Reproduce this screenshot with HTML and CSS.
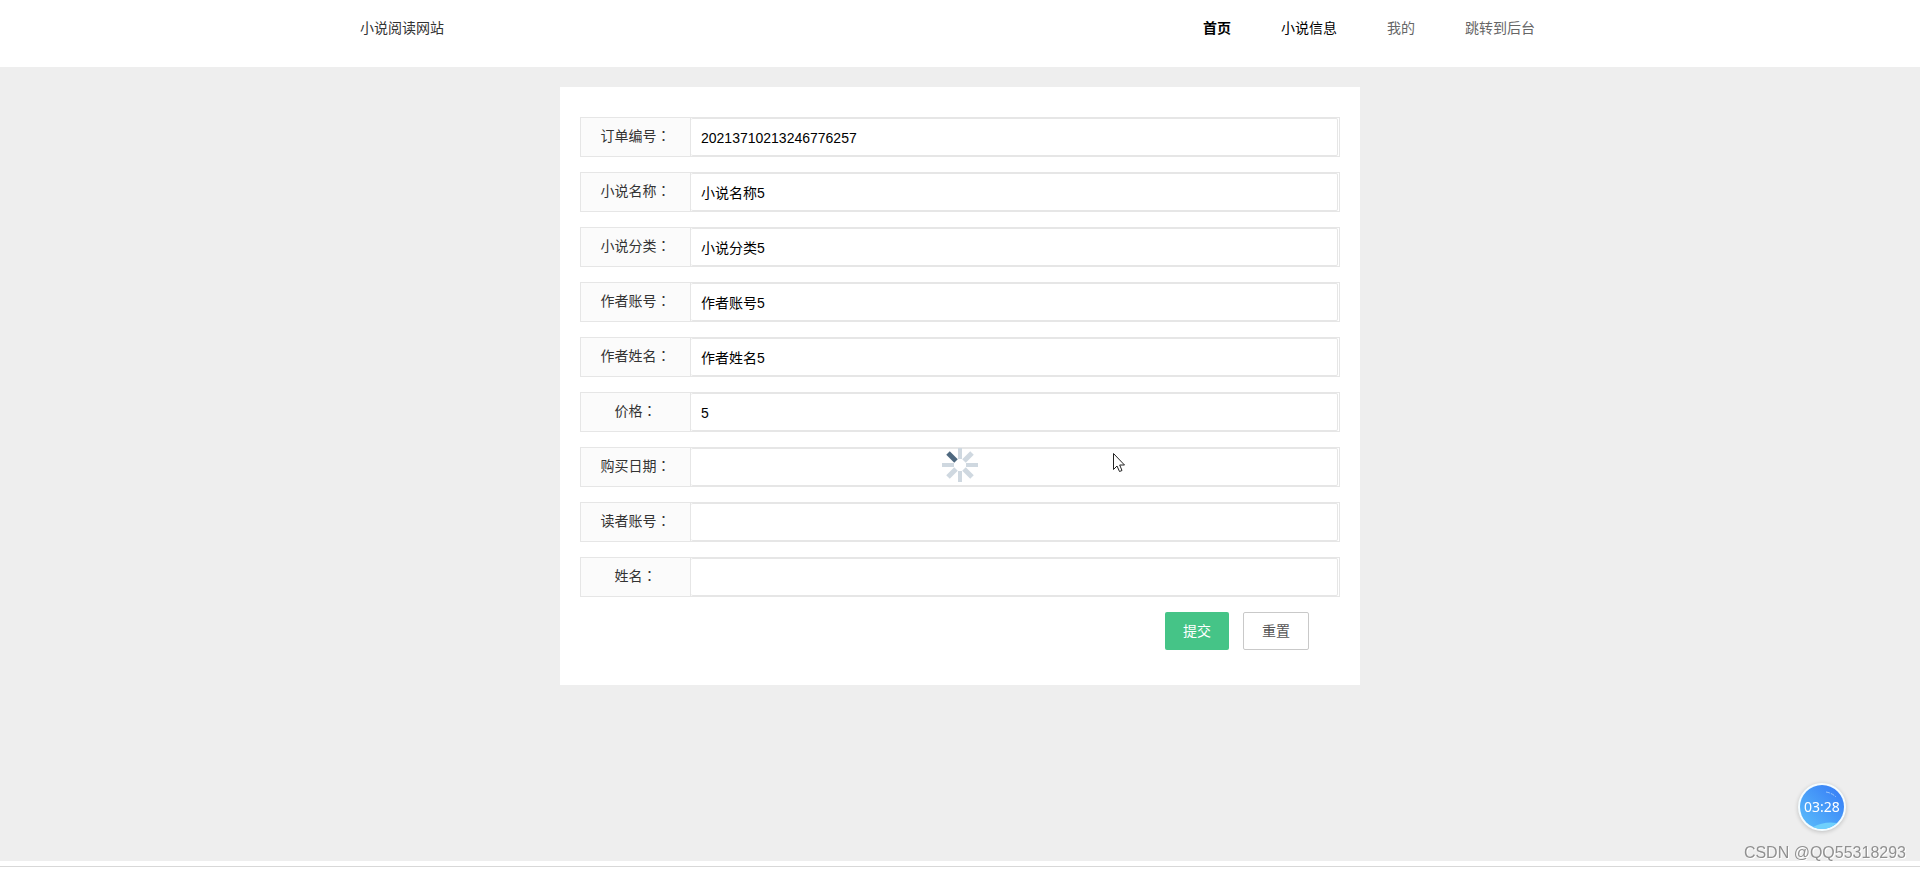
FILE: index.html
```
<!DOCTYPE html>
<html lang="zh-CN">
<head>
<meta charset="utf-8">
<title>小说阅读网站</title>
<link rel="stylesheet" href="styles.css">
</head>
<body>
<header class="header">
  <div class="header-inner">
    <span class="brand">小说阅读网站</span>
    <nav class="nav">
      <a class="nav-link current" href="#">首页</a>
      <a class="nav-link active" href="#">小说信息</a>
      <a class="nav-link" href="#">我的</a>
      <a class="nav-link" href="#">跳转到后台</a>
    </nav>
  </div>
</header>
<main class="main">
  <form class="card">
    <div class="row"><label class="label" for="f1">订单编号<span class="colon" lang="zh-TW">：</span></label><input class="input" id="f1" type="text" value="20213710213246776257"></div>
    <div class="row"><label class="label" for="f2">小说名称<span class="colon" lang="zh-TW">：</span></label><input class="input" id="f2" type="text" value="小说名称5"></div>
    <div class="row"><label class="label" for="f3">小说分类<span class="colon" lang="zh-TW">：</span></label><input class="input" id="f3" type="text" value="小说分类5"></div>
    <div class="row"><label class="label" for="f4">作者账号<span class="colon" lang="zh-TW">：</span></label><input class="input" id="f4" type="text" value="作者账号5"></div>
    <div class="row"><label class="label" for="f5">作者姓名<span class="colon" lang="zh-TW">：</span></label><input class="input" id="f5" type="text" value="作者姓名5"></div>
    <div class="row"><label class="label" for="f6">价格<span class="colon" lang="zh-TW">：</span></label><input class="input" id="f6" type="text" value="5"></div>
    <div class="row"><label class="label" for="f7">购买日期<span class="colon" lang="zh-TW">：</span></label><input class="input" id="f7" type="text"></div>
    <div class="row"><label class="label" for="f8">读者账号<span class="colon" lang="zh-TW">：</span></label><input class="input" id="f8" type="text"></div>
    <div class="row"><label class="label" for="f9">姓名<span class="colon" lang="zh-TW">：</span></label><input class="input" id="f9" type="text"></div>
    <div class="actions">
      <button class="btn btn-primary" type="submit">提交</button>
      <button class="btn btn-plain" type="reset">重置</button>
    </div>
  </form>
</main>
<footer class="footer"></footer>
<svg class="spinner" viewBox="-18 -18 36 36" aria-hidden="true">
  <g stroke="#cfd8e0" stroke-width="4">
    <path d="M0-6V-17M0 6V17M-6 0H-18M6 0H18"/>
    <path stroke-width="5" d="M4-4L12-12M4 4L12 12M-4 4L-12 12"/>
  </g>
  <path stroke="#4e687f" stroke-width="5" d="M-4-4L-12-12"/>
</svg>
<svg class="pointer" viewBox="0 0 12 19" aria-hidden="true">
  <path d="M.5.5V16.5L4 13L6.5 18.5L9 17.5L6.7 12H11.5Z" fill="#fff" stroke="#222" stroke-width="1"/>
</svg>
<div class="clock">
  <svg class="clock-art" viewBox="0 0 44 44" aria-hidden="true">
    <defs><linearGradient id="sky" x1="0" y1="1" x2="1" y2="0"><stop offset="0" stop-color="#5cc0fb"/><stop offset="1" stop-color="#3478f6"/></linearGradient></defs>
    <circle cx="22" cy="22" r="22" fill="url(#sky)"/>
    <path d="M13 42Q24 36 37 38Q30 44 22 44Q17 44 13 42Z" fill="#6fd0fc"/>
    <path d="M26 7Q32 8 36 12" fill="none" stroke="#9cc6fb" stroke-width="1" stroke-dasharray="4 1"/>
  </svg>
  <span class="clock-time">03:28</span>
</div>
<div class="watermark">CSDN @QQ55318293</div>
</body>
</html>
```
FILE: styles.css
```
* { box-sizing: border-box; }
body {
  margin: 0;
  min-height: 100vh;
  display: flex;
  flex-direction: column;
  background: #eee;
  color: #333;
  font: 14px/20px "Liberation Sans", "Noto Sans CJK SC", sans-serif;
}
.header { background: #fff; padding: 18px 20px 29px; }
.header-inner {
  max-width: 1200px;
  margin: 0 auto;
  display: flex;
  justify-content: space-between;
}
.nav { display: flex; gap: 50px; padding-right: 25px; }
.nav-link { color: #666; text-decoration: none; }
.active { color: #000; }
.current { color: #000; font-weight: 700; }
.main { flex: 1; padding: 20px; }
.card {
  max-width: 800px;
  margin: 0 auto;
  padding: 30px 20px 35px;
  background: #fff;
}
.row {
  display: flex;
  margin-bottom: 15px;
  height: 40px;
  border: 1px solid #e6e6e6;
  padding-right: 1px;
}
.label {
  width: 110px;
  padding: 7px 0;
  text-align: center;
  background: #fbfbfb;
  border-right: 1px solid #e6e6e6;
}
.colon { font-family: "Noto Sans CJK TC", sans-serif; }
.input {
  flex: 1;
  min-width: 0;
  padding: 2px 10px 0;
  border: 1px solid #e6e6e6;
  border-left: 0;
  border-radius: 2px;
  background: #fff;
  color: #000;
  font: inherit;
  outline: 0;
}
.actions { display: flex; justify-content: flex-end; gap: 14px; padding-right: 31px; }
.btn {
  height: 38px;
  padding: 0 18px;
  border: 0;
  border-radius: 2px;
  font: inherit;
}
.btn-primary { background: #45c487; color: #fff; }
.btn-plain { background: #fff; color: #555; border: 1px solid #c9c9c9; }
.footer {
  padding-top: 5px;
  background: #fff;
}
.footer::after {
  content: "";
  display: block;
  height: 3px;
  border-top: 1px solid #d8d8d8;
}
.spinner {
  position: fixed;
  left: 50%;
  top: 465px;
  width: 36px;
  height: 36px;
  transform: translate(-50%, -50%);
}
.pointer { position: fixed; left: 1113px; top: 453px; width: 12px; height: 19px; }
.clock {
  position: fixed;
  right: 74px;
  bottom: 39px;
  width: 48px;
  height: 48px;
  padding: 2px;
  border-radius: 50%;
  background: #f4fcff;
  box-shadow: 0 1px 4px #0003;
}
.clock-art { display: block; width: 44px; height: 44px; }
.clock-time {
  position: absolute;
  inset: 0;
  color: #fff;
  font: 14px/48px "Noto Sans", sans-serif;
  text-align: center;
}
.watermark {
  position: fixed;
  right: 14px;
  bottom: 7px;
  color: #909090;
  font-size: 16px;
  text-shadow: 1px 1px 0 #fff;
}
```
